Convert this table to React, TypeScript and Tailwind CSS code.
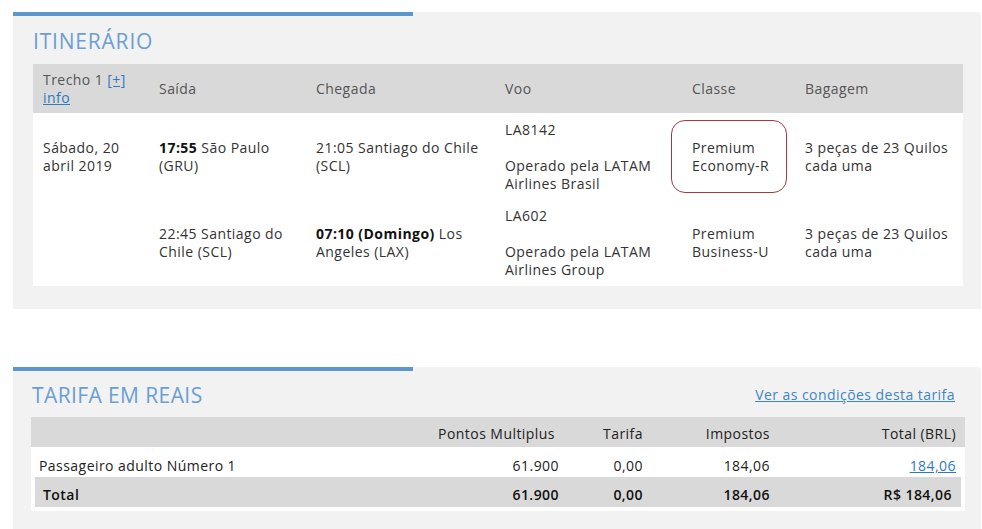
import React from "react";

const font = { fontFamily: '"Open Sans", "Liberation Sans", sans-serif' };

export default function App() {
  return (
    <div className="w-[982px] h-[529px] overflow-hidden bg-white pt-[12px] pl-[13px] pr-[1px] text-[14px] tracking-[0.45px] text-[#333]" style={font}>
      {/* ITINERARIO */}
      <section className="relative bg-[#f2f2f2] rounded-tr-[4px] pl-[20px] pr-[18px] pb-[23px]">
        <div className="absolute left-0 top-0 w-[400px] h-[4px] bg-[#5b97cc]" />
        <div className="pt-[15px] h-[52px] mb-[0px]">
          <h2 className="text-[21px] leading-[28px] text-[#6a9fd3] tracking-[0.8px]">ITINERÁRIO</h2>
        </div>
        <table className="w-[930px] table-fixed border-collapse leading-[18px]">
          <colgroup>
            <col className="w-[116px]" />
            <col className="w-[157px]" />
            <col className="w-[189px]" />
            <col className="w-[187px]" />
            <col className="w-[113px]" />
            <col className="w-[168px]" />
          </colgroup>
          <thead>
            <tr className="bg-[#d9d9d9] text-[#555] text-left h-[49px]">
              <th className="font-normal px-[10px] pt-[7px] pb-[6px] align-middle">
                Trecho 1{" "}
                <a className="text-[#2f79bf] underline">
                  [+]
                  <br />
                  info
                </a>
              </th>
              <th className="font-normal px-[10px] align-middle">Saída</th>
              <th className="font-normal px-[10px] align-middle">Chegada</th>
              <th className="font-normal px-[10px] align-middle">Voo</th>
              <th className="font-normal px-[10px] align-middle">Classe</th>
              <th className="font-normal px-[10px] align-middle">Bagagem</th>
            </tr>
          </thead>
          <tbody className="bg-white">
            <tr className="h-[87px]">
              <td className="px-[10px] py-[7px] align-middle">
                Sábado, 20
                <br />
                abril 2019
              </td>
              <td className="px-[10px] align-middle">
                <b className="font-bold text-[#111]">17:55</b> São Paulo
                <br />
                (GRU)
              </td>
              <td className="px-[10px] align-middle">
                21:05 Santiago do Chile
                <br />
                (SCL)
              </td>
              <td className="px-[10px] align-middle">
                LA8142
                <br />
                <br />
                Operado pela LATAM
                <br />
                Airlines Brasil
              </td>
              <td className="relative px-[10px] align-middle">
                Premium
                <br />
                Economy-R
                <div className="absolute left-[-11px] top-[7px] w-[116px] h-[73px] rounded-[14px] border border-[#a33a3f]" />
              </td>
              <td className="px-[10px] align-middle">
                3 peças de 23 Quilos
                <br />
                cada uma
              </td>
            </tr>
            <tr className="h-[86px]">
              <td className="px-[10px] py-[7px] align-middle" />
              <td className="px-[10px] align-middle">
                22:45 Santiago do
                <br />
                Chile (SCL)
              </td>
              <td className="px-[10px] align-middle">
                <b className="font-bold text-[#111]">07:10 (Domingo)</b> Los
                <br />
                Angeles (LAX)
              </td>
              <td className="px-[10px] align-middle">
                LA602
                <br />
                <br />
                Operado pela LATAM
                <br />
                Airlines Group
              </td>
              <td className="px-[10px] align-middle">
                Premium
                <br />
                Business-U
              </td>
              <td className="px-[10px] align-middle">
                3 peças de 23 Quilos
                <br />
                cada uma
              </td>
            </tr>
          </tbody>
        </table>
      </section>

      {/* TARIFA */}
      <section className="relative mt-[58px] bg-[#f2f2f2] rounded-tr-[4px] pl-[18px] pr-[16px] pb-[30px]">
        <div className="absolute left-0 top-0 w-[400px] h-[4px] bg-[#5b97cc]" />
        <div className="pt-[14px] h-[50px] flex items-start justify-between">
          <h2 className="pl-[1px] text-[21px] leading-[28px] text-[#6a9fd3] tracking-[0.4px]">TARIFA EM REAIS</h2>
          <a className="mr-[10px] mt-[4px] text-[14px] leading-[20px] text-[#3d86c6] underline">Ver as condições desta tarifa</a>
        </div>
        <div className="grid grid-cols-[369px_167px_84px_127px_187px] h-[30px] items-center bg-[#d9d9d9] text-[#222] pt-[2px]">
          <div />
          <div className="text-right pr-[12px]">Pontos Multiplus</div>
          <div className="text-right pr-[8px]">Tarifa</div>
          <div className="text-right pr-[8px]">Impostos</div>
          <div className="text-right pr-[9px]">Total (BRL)</div>
        </div>
        <div className="bg-white px-[4px] pb-[4px] text-[#222]">
          <div className="grid grid-cols-[365px_167px_84px_127px_183px] h-[30px] items-center pt-[6px]">
            <div className="pl-[4px]">Passageiro adulto Número 1</div>
            <div className="text-right pr-[8px]">61.900</div>
            <div className="text-right pr-[8px]">0,00</div>
            <div className="text-right pr-[8px]">184,06</div>
            <div className="text-right pr-[5px]">
              <a className="text-[#2f79bf] underline">184,06</a>
            </div>
          </div>
          <div className="grid grid-cols-[365px_167px_84px_127px_183px] h-[30px] items-center bg-[#d9d9d9] pt-[5px] font-semibold text-[#111]">
            <div className="pl-[8px]">Total</div>
            <div className="text-right pr-[8px]">61.900</div>
            <div className="text-right pr-[8px]">0,00</div>
            <div className="text-right pr-[8px]">184,06</div>
            <div className="text-right pr-[9px]">R$ 184,06</div>
          </div>
        </div>
      </section>
    </div>
  );
}
